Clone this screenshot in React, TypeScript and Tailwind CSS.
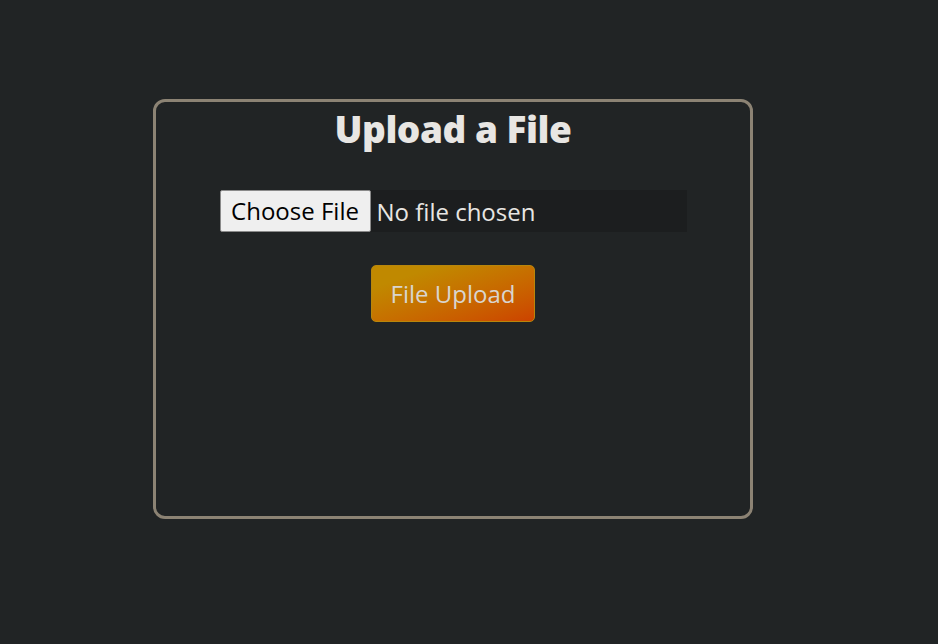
import React from "react";

export default function App() {
  return (
    <div className="min-h-[644px] w-full bg-[#212425] pt-[99px] pl-[153px]" style={{ fontFamily: '"Open Sans", sans-serif' }}>
      <div className="w-[600px] h-[420px] border-[3px] border-[#8c8374] rounded-[12px] flex flex-col items-center">
        <h1 className="mt-[2px] text-[37px] leading-[50px] font-extrabold text-[#e8e6e3] tracking-[-0.5px]" style={{ fontFamily: '"Open Sans", sans-serif' }}>
          Upload a File
        </h1>
        <div className="mt-[36px] flex w-[467px] h-[42px] bg-[#1c1e1f]">
          <div className="w-[151px] h-[42px] bg-[#efefef] border border-[#8a8a8a] rounded-[2px] flex items-center justify-center text-[24px] text-black">
            Choose File
          </div>
          <div className="pl-[6px] pt-[2px] flex items-center text-[24px] text-[#e8e6e3]">No file chosen</div>
        </div>
        <button className="mt-[33px] w-[164px] h-[57px] rounded-[5px] border border-[#b8860b] bg-gradient-to-br from-[#c08900] from-[20%] to-[#cc4200] text-[24px] text-[#d9d5cf]">
          File Upload
        </button>
      </div>
    </div>
  );
}
